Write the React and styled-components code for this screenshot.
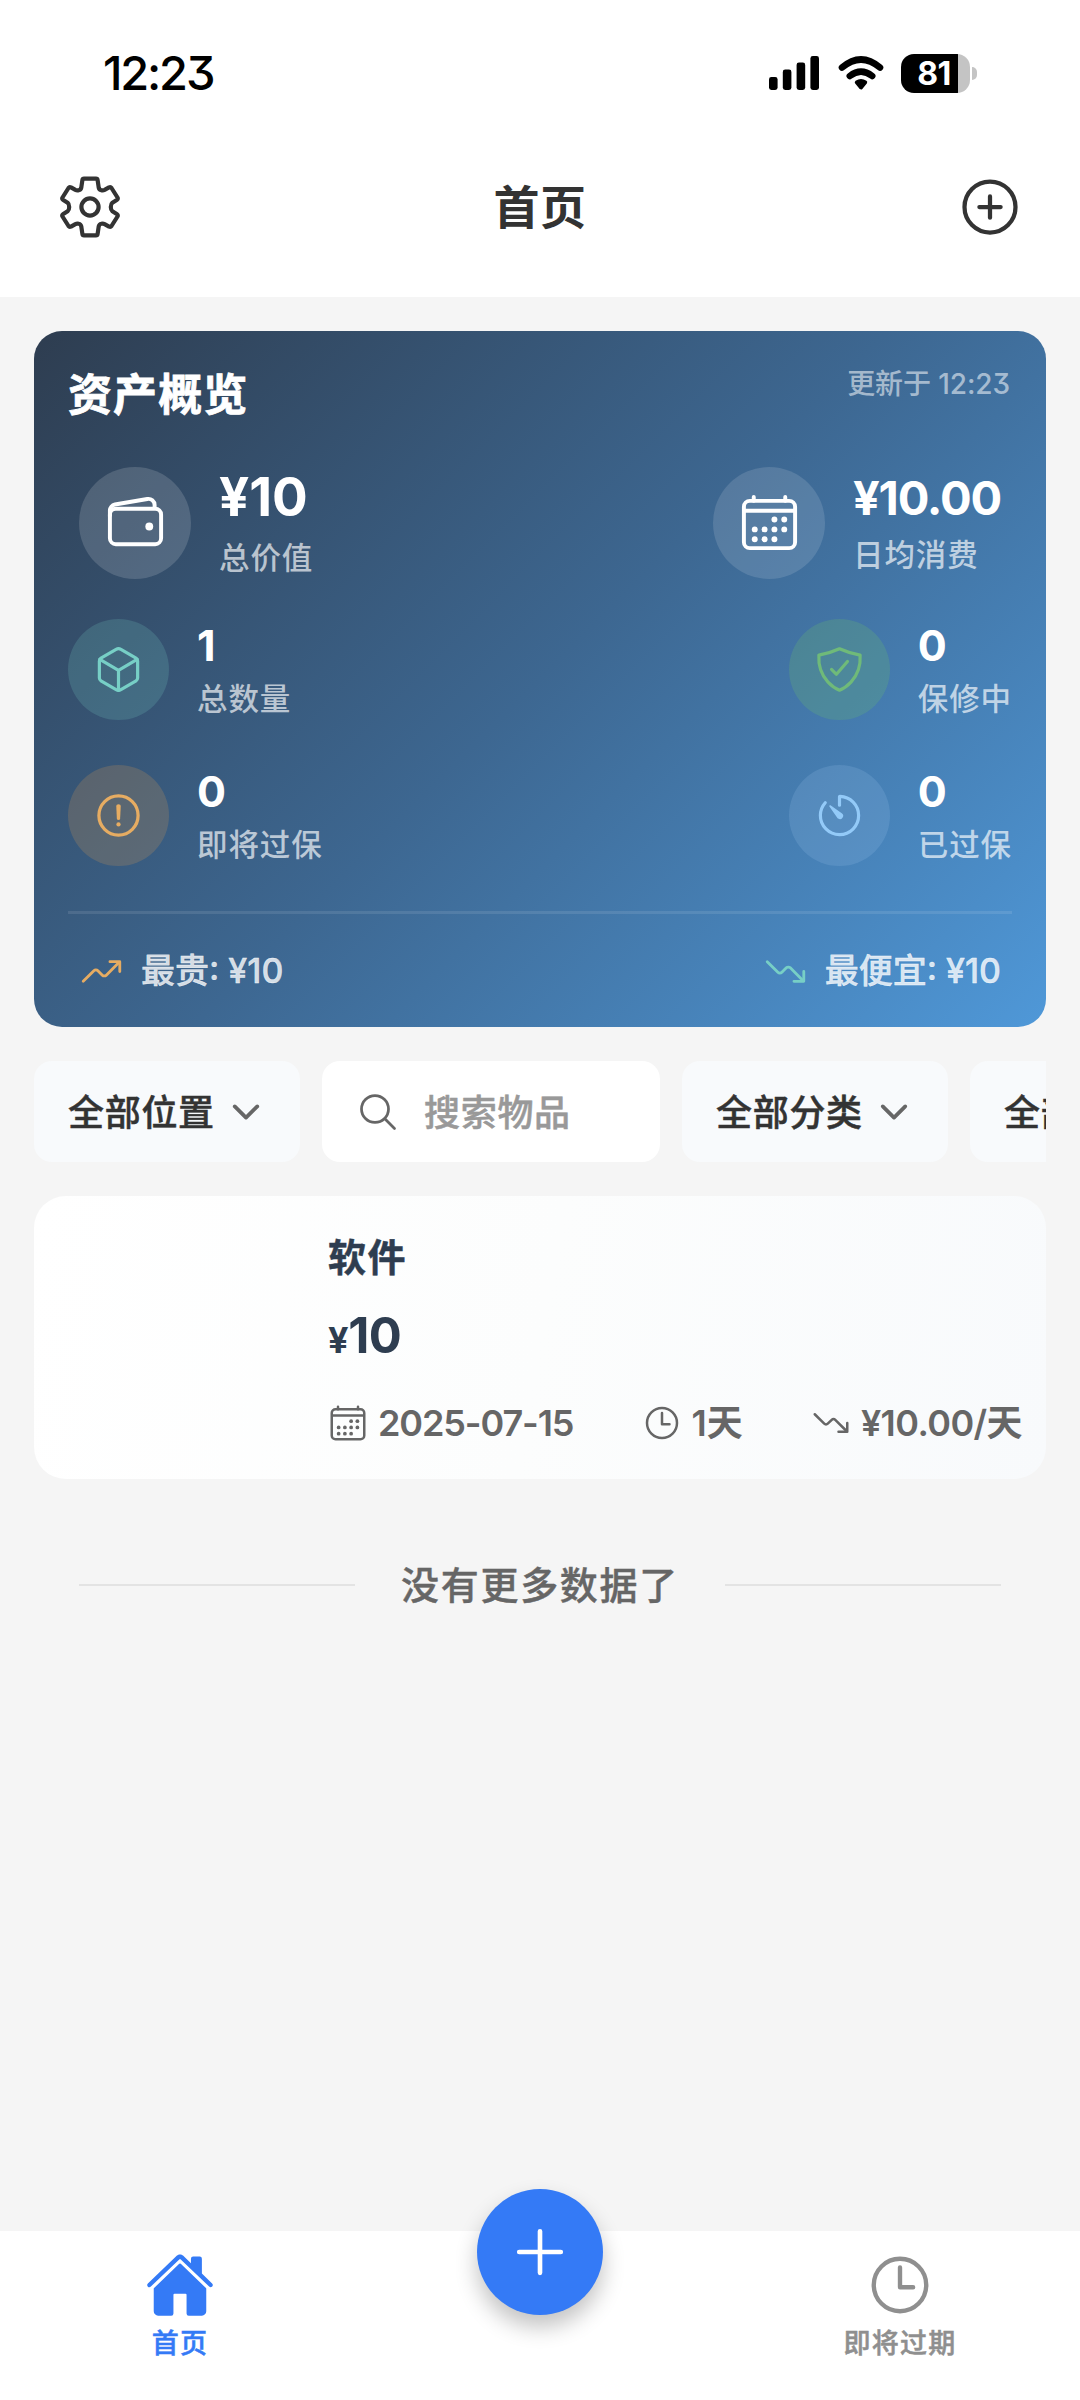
import styled, { createGlobalStyle } from "styled-components";
import {
  IoAdd,
  IoAddCircleOutline,
  IoCalendarOutline,
  IoChevronDownOutline,
  IoCubeOutline,
  IoHome,
  IoSearchOutline,
  IoShieldCheckmarkOutline,
  IoTimeOutline,
  IoTimerOutline,
  IoTrendingDownOutline,
  IoTrendingUpOutline,
  IoWalletOutline,
} from "react-icons/io5";

const GlobalStyle = createGlobalStyle`
  * {
    box-sizing: border-box;
  }
  body {
    margin: 0;
    background: #f5f5f5;
    font-family: Inter, "Noto Sans CJK SC", sans-serif;
    font-feature-settings: "cv09";
  }
  svg {
    display: block;
    flex-shrink: 0;
  }
`;

const Page = styled.div`
  display: flex;
  flex-direction: column;
  width: 1080px;
  height: 2400px;
  overflow: hidden;
  background: #f5f5f5;
`;

/* header */
const Header = styled.header`
  height: 297px;
  background: #fff;
`;
const StatusBar = styled.div`
  display: flex;
  justify-content: space-between;
  align-items: center;
  height: 117px;
  padding: 29px 103px 0 103px;
`;
const Clock = styled.div`
  font-size: 47px;
  font-weight: 500;
  line-height: 60px;
  letter-spacing: -2.2px;
  color: #000;
`;
const StatusIcons = styled.div`
  display: flex;
  align-items: center;
`;
const Battery = styled.div`
  display: flex;
  align-items: center;
  justify-content: center;
  width: 69px;
  height: 39px;
  margin-left: 17px;
  padding-right: 3px;
  border-radius: 13px;
  background: linear-gradient(90deg, #000 57px, #c4c4c4 57px);
  color: #fff;
  font-size: 32px;
  font-weight: 700;
  line-height: 39px;
  letter-spacing: -0.5px;
`;
const BatteryCap = styled.div`
  width: 5px;
  height: 13px;
  margin: 0 0 0 2px;
  border-radius: 0 6px 6px 0;
  background: #c4c4c4;
`;
const TopBar = styled.div`
  display: flex;
  justify-content: space-between;
  align-items: center;
  height: 180px;
  padding: 0 56px;
  color: #333;
`;
const PageTitle = styled.h1`
  margin: 0;
  font-size: 46px;
  font-weight: 700;
  line-height: 60px;
  letter-spacing: 0.6px;
`;

/* main column */
const Content = styled.main`
  flex: 1;
  padding: 34px 34px 0;
`;

const OverviewCard = styled.section`
  height: 696px;
  padding: 34px 34px 0;
  border-radius: 28px;
  background: linear-gradient(135deg, #2e3d50 0%, #3d6791 50%, #4f98d8 100%);
  color: #fff;
`;
const OverviewHead = styled.div`
  display: flex;
  justify-content: space-between;
  height: 60px;
`;
const OverviewTitle = styled.h2`
  margin: 0;
  font-size: 44px;
  font-weight: 700;
  line-height: 61px;
  letter-spacing: 1.1px;
  -webkit-text-stroke: 0.8px #fff;
`;
const UpdatedAt = styled.div`
  padding-right: 2px;
  font-size: 28px;
  font-weight: 500;
  line-height: 38px;
  letter-spacing: -0.1px;
  color: rgba(255, 255, 255, 0.55);
`;
const StatRow = styled.div`
  display: flex;
  justify-content: space-between;
  margin-top: ${({ $top }) => $top}px;
  padding: 0 ${({ $inset }) => $inset || 0}px;
`;
const Stat = styled.div`
  display: flex;
  align-items: center;
  gap: 28px;
`;
const StatIcon = styled.div`
  display: flex;
  align-items: center;
  justify-content: center;
  width: ${({ $size }) => $size}px;
  height: ${({ $size }) => $size}px;
  border-radius: 50%;
  background: ${({ $bg }) => $bg};
  color: ${({ $color }) => $color};
`;
const StatText = styled.div`
  min-width: ${({ $width }) => $width || 0}px;
`;
const StatValue = styled.div`
  margin-bottom: 8px;
  font-size: ${({ $size }) => $size}px;
  font-weight: 700;
  line-height: ${({ $line }) => $line}px;
  letter-spacing: ${({ $spacing }) => $spacing || 0}px;
`;
const StatLabel = styled.div`
  font-size: 30.5px;
  font-weight: 500;
  line-height: 42px;
  letter-spacing: 0.9px;
  color: rgba(255, 255, 255, 0.66);
`;
const OverviewFoot = styled.div`
  display: flex;
  justify-content: space-between;
  align-items: center;
  height: 117px;
  margin-top: 45px;
  padding: 0 11px;
  border-top: 3px solid rgba(255, 255, 255, 0.1);
`;
const Extreme = styled.div`
  display: flex;
  align-items: center;
  gap: 17px;
  font-size: 34px;
  font-weight: 500;
  line-height: 44px;
  color: rgba(255, 255, 255, 0.8);
  -webkit-text-stroke: 0.4px rgba(255, 255, 255, 0.8);
  svg {
    color: ${({ $color }) => $color};
  }
`;

/* filters */
const FilterRow = styled.div`
  display: flex;
  gap: 22px;
  margin-top: 34px;
  overflow: hidden;
`;
const FilterChip = styled.div`
  display: flex;
  flex-shrink: 0;
  align-items: center;
  justify-content: space-between;
  width: 266px;
  height: 101px;
  padding: 0 34px;
  border-radius: 18px;
  background: #f8fafc;
  color: #333;
  font-size: 36px;
  font-weight: 500;
  letter-spacing: 0.7px;
  white-space: nowrap;
  span {
    margin-top: -4px;
    -webkit-text-stroke: 0.5px #333;
  }
  svg {
    color: #666;
  }
`;
const SearchBox = styled.div`
  display: flex;
  flex-shrink: 0;
  align-items: center;
  gap: 24px;
  width: 338px;
  height: 101px;
  padding-left: 34px;
  border-radius: 18px;
  background: #fff;
  color: #999;
  font-size: 36px;
  font-weight: 500;
  letter-spacing: 0.7px;
  span {
    margin-top: -4px;
    -webkit-text-stroke: 0.5px #999;
  }
  svg {
    color: #666;
  }
`;

/* item list */
const ItemCard = styled.article`
  height: 283px;
  margin-top: 34px;
  padding: 36px 24px 0 294px;
  border-radius: 32px;
  background: linear-gradient(100deg, #fff 0%, #fcfdfd 50%, #f8fafc 100%);
  color: #2e3d50;
`;
const ItemName = styled.h3`
  margin: 0;
  font-size: 38px;
  font-weight: 700;
  line-height: 50px;
  letter-spacing: 1.4px;
  -webkit-text-stroke: 0.5px #2e3d50;
`;
const ItemPrice = styled.div`
  margin-top: 24px;
  font-size: 49px;
  font-weight: 700;
  line-height: 60px;
  letter-spacing: -0.4px;
  small {
    font-size: 36px;
  }
`;
const ItemMeta = styled.div`
  display: flex;
  justify-content: space-between;
  margin-top: 31px;
`;
const MetaCell = styled.div`
  display: flex;
  align-items: center;
  gap: 10px;
  color: #666;
  font-size: 36px;
  font-weight: 600;
  line-height: 44px;
  letter-spacing: ${({ $spacing }) => $spacing || 0}px;
`;

const NoMore = styled.div`
  display: flex;
  align-items: center;
  gap: 46px;
  margin-top: 78px;
  padding: 0 45px;
  color: #666;
  font-size: 38px;
  font-weight: 500;
  line-height: 56px;
  letter-spacing: 1.7px;
  -webkit-text-stroke: 0.4px #666;
  &::before,
  &::after {
    content: "";
    flex: 1;
    height: 2px;
    background: #e3e3e3;
  }
`;

/* bottom tab bar */
const TabBar = styled.nav`
  display: grid;
  grid-template-columns: repeat(3, 1fr);
  justify-items: center;
  height: 169px;
  background: #fff;
`;
const Tab = styled.div`
  display: flex;
  flex-direction: column;
  align-items: center;
  padding-top: 19px;
  color: ${({ $active }) => ($active ? "#347af6" : "#8f8f8f")};
  font-size: 27px;
  font-weight: 500;
  line-height: 36px;
  letter-spacing: 1.2px;
  -webkit-text-stroke: 0.5px currentColor;
  svg {
    margin-bottom: 6px;
  }
`;
const AddButton = styled.div`
  display: flex;
  align-items: center;
  justify-content: center;
  width: 126px;
  height: 126px;
  margin-top: -42px;
  border-radius: 50%;
  background: #347af6;
  box-shadow: 0 12px 22px rgba(0, 0, 0, 0.24);
  color: #fff;
`;

function GearIcon() {
  return (
    <svg width="68" height="68" viewBox="-34 -34 68 68" fill="none" stroke="#333" strokeWidth="4.2" strokeLinejoin="round">
      <path
        d="M-6 -28.4H6Q7.4 -28.4 7.6 -27L8.7 -19.5Q9.2 -17.2 11.3 -16.8Q13 -16.3 14.6 -17.1L19 -19.6Q20.6 -20.3 21.5 -19L27.5 -9.5Q28.2 -8.2 27.1 -7.3L22.4 -4.3Q20.8 -3 20.8 0Q20.8 3 22.4 4.3L27.1 7.3Q28.2 8.2 27.5 9.5L21.5 19Q20.6 20.3 19 19.6L14.6 17.1Q13 16.3 11.3 16.8Q9.2 17.2 8.7 19.5L7.6 27Q7.4 28.4 6 28.4H-6Q-7.4 28.4 -7.6 27L-8.7 19.5Q-9.2 17.2 -11.3 16.8Q-13 16.3 -14.6 17.1L-19 19.6Q-20.6 20.3 -21.5 19L-27.5 9.5Q-28.2 8.2 -27.1 7.3L-22.4 4.3Q-20.8 3 -20.8 0Q-20.8 -3 -22.4 -4.3L-27.1 -7.3Q-28.2 -8.2 -27.5 -9.5L-21.5 -19Q-20.6 -20.3 -19 -19.6L-14.6 -17.1Q-13 -16.3 -11.3 -16.8Q-9.2 -17.2 -8.7 -19.5L-7.6 -27Q-7.4 -28.4 -6 -28.4Z"
      />
      <circle r="8.6" />
    </svg>
  );
}

function SignalIcon() {
  return (
    <svg width="50" height="34" viewBox="0 0 50 34">
      <rect x="0" y="21" width="8.6" height="13" rx="2.4" />
      <rect x="13.8" y="13.5" width="8.6" height="20.5" rx="2.4" />
      <rect x="27.6" y="6.5" width="8.6" height="27.5" rx="2.4" />
      <rect x="41.4" y="0" width="8.6" height="34" rx="2.4" />
    </svg>
  );
}

const WifiSvg = styled.svg`
  margin-left: 19px;
`;
function WifiIcon() {
  return (
    <WifiSvg width="46" height="35" viewBox="0 0 46 35" fill="none" stroke="#000" strokeWidth="6.6" strokeLinecap="round">
      <path d="M4 11.6Q23 -4.6 42 11.6" />
      <path d="M11.8 20Q23 11.4 34.2 20" />
      <path d="M18.5 26.3Q23 23.4 27.5 26.3L23 31.8Z" fill="#000" strokeWidth="3.4" strokeLinejoin="round" />
    </WifiSvg>
  );
}

function AlertIcon({ size }) {
  return (
    <svg width={size} height={size} viewBox="-25 -25 50 50" fill="none" stroke="currentColor">
      <circle r="19.2" strokeWidth="3.2" />
      <path d="M-2.2 -9.2Q-2.2 -11 0 -11Q2.2 -11 2.2 -9.2L1.6 3.2Q1.4 4.4 0 4.4Q-1.4 4.4 -1.6 3.2Z" fill="currentColor" stroke="none" />
      <circle cy="8.8" r="2.1" fill="currentColor" stroke="none" />
    </svg>
  );
}

const smallStats = [
  [
    { value: "1", label: "总数量", Icon: IoCubeOutline, color: "#77cfc6", bg: "rgba(120, 205, 196, 0.2)" },
    { value: "0", label: "保修中", Icon: IoShieldCheckmarkOutline, color: "#6fba79", bg: "rgba(110, 190, 110, 0.24)" },
  ],
  [
    { value: "0", label: "即将过保", Icon: AlertIcon, color: "#e6ac62", bg: "rgba(230, 162, 80, 0.2)" },
    { value: "0", label: "已过保", Icon: IoTimerOutline, color: "#93caf8", bg: "rgba(160, 202, 240, 0.18)" },
  ],
];

function Overview() {
  return (
    <OverviewCard>
      <OverviewHead>
        <OverviewTitle>资产概览</OverviewTitle>
        <UpdatedAt>更新于 12:23</UpdatedAt>
      </OverviewHead>
      <StatRow $top={41} $inset={11}>
        <Stat>
          <StatIcon $size={112} $bg="rgba(255, 255, 255, 0.15)" $color="#fff">
            <IoWalletOutline size={63} />
          </StatIcon>
          <StatText>
            <StatValue $size={53} $line={63}>¥10</StatValue>
            <StatLabel>总价值</StatLabel>
          </StatText>
        </Stat>
        <Stat>
          <StatIcon $size={112} $bg="rgba(255, 255, 255, 0.13)" $color="#fff">
            <IoCalendarOutline size={63} />
          </StatIcon>
          <StatText $width={148}>
            <StatValue $size={47} $line={56} $spacing={-1.2}>¥10.00</StatValue>
            <StatLabel>日均消费</StatLabel>
          </StatText>
        </Stat>
      </StatRow>
      {smallStats.map((row, i) => (
        <StatRow key={i} $top={i === 0 ? 40 : 45}>
          {row.map(({ value, label, Icon, color, bg }) => (
            <Stat key={label}>
              <StatIcon $size={101} $bg={bg} $color={color}>
                <Icon size={51} />
              </StatIcon>
              <StatText>
                <StatValue $size={43} $line={50}>{value}</StatValue>
                <StatLabel>{label}</StatLabel>
              </StatText>
            </Stat>
          ))}
        </StatRow>
      ))}
      <OverviewFoot>
        <Extreme $color="#e6ac62">
          <IoTrendingUpOutline size={45} />
          最贵: ¥10
        </Extreme>
        <Extreme $color="#77cfc6">
          <IoTrendingDownOutline size={45} />
          最便宜: ¥10
        </Extreme>
      </OverviewFoot>
    </OverviewCard>
  );
}

function Filter({ label }) {
  return (
    <FilterChip>
      <span>{label}</span>
      <IoChevronDownOutline size={40} />
    </FilterChip>
  );
}

function App() {
  return (
    <Page>
      <GlobalStyle />
      <Header>
        <StatusBar>
          <Clock>12:23</Clock>
          <StatusIcons>
            <SignalIcon />
            <WifiIcon />
            <Battery>81</Battery>
            <BatteryCap />
          </StatusIcons>
        </StatusBar>
        <TopBar>
          <GearIcon />
          <PageTitle>首页</PageTitle>
          <IoAddCircleOutline size={68} />
        </TopBar>
      </Header>

      <Content>
        <Overview />
        <FilterRow>
          <Filter label="全部位置" />
          <SearchBox>
            <IoSearchOutline size={44} />
            <span>搜索物品</span>
          </SearchBox>
          <Filter label="全部分类" />
          <Filter label="全部状态" />
        </FilterRow>
        <ItemCard>
          <ItemName>软件</ItemName>
          <ItemPrice>
            <small>¥</small>10
          </ItemPrice>
          <ItemMeta>
            <MetaCell $spacing={-1.1}>
              <IoCalendarOutline size={40} />
              2025-07-15
            </MetaCell>
            <MetaCell>
              <IoTimeOutline size={40} />
              1天
            </MetaCell>
            <MetaCell $spacing={-0.6}>
              <IoTrendingDownOutline size={40} />
              ¥10.00/天
            </MetaCell>
          </ItemMeta>
        </ItemCard>
        <NoMore>没有更多数据了</NoMore>
      </Content>

      <TabBar>
        <Tab $active>
          <IoHome size={70} />
          首页
        </Tab>
        <AddButton>
          <IoAdd size={74} />
        </AddButton>
        <Tab>
          <IoTimeOutline size={70} />
          即将过期
        </Tab>
      </TabBar>
    </Page>
  );
}

export default App;
